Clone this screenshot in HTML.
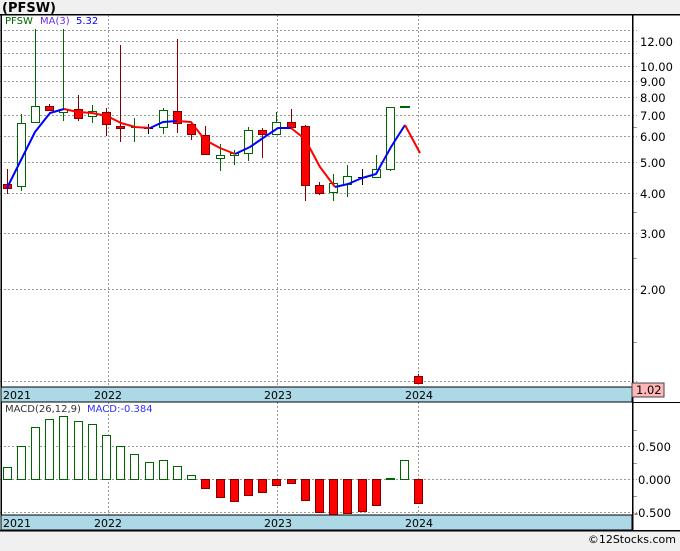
<!DOCTYPE html>
<html><head><meta charset="utf-8"><style>
html,body{margin:0;padding:0;background:#f0f0f0;}
body{width:680px;height:546px;overflow:hidden;font-family:"Liberation Sans","DejaVu Sans",sans-serif;}
svg text{font-family:"DejaVu Sans","Liberation Sans",sans-serif;}
</style></head><body>
<svg width="680" height="546" viewBox="0 0 680 546" xmlns="http://www.w3.org/2000/svg" shape-rendering="crispEdges">
<rect x="0" y="0" width="680" height="546" fill="#f0f0f0"/>
<text x="2" y="12" font-size="13" font-weight="bold" fill="#000">(PFSW)</text>
<rect x="0" y="14" width="680" height="517" fill="#fff"/>
<!-- horizontal grid price -->
<g stroke="#999" stroke-dasharray="2,2" stroke-width="1">
<line x1="0" y1="30.5" x2="637" y2="30.5"/>
<line x1="0" y1="41.5" x2="637" y2="41.5"/>
<line x1="0" y1="53.5" x2="637" y2="53.5"/>
<line x1="0" y1="66.5" x2="637" y2="66.5"/>
<line x1="0" y1="81.5" x2="637" y2="81.5"/>
<line x1="0" y1="97.5" x2="637" y2="97.5"/>
<line x1="0" y1="115.5" x2="637" y2="115.5"/>
<line x1="0" y1="136.5" x2="637" y2="136.5"/>
<line x1="0" y1="162.5" x2="637" y2="162.5"/>
<line x1="0" y1="193.5" x2="637" y2="193.5"/>
<line x1="0" y1="233.5" x2="637" y2="233.5"/>
<line x1="0" y1="289.5" x2="637" y2="289.5"/>
<line x1="0" y1="381.5" x2="637" y2="381.5"/>
<line x1="0" y1="446.5" x2="637" y2="446.5"/>
<line x1="0" y1="479.5" x2="637" y2="479.5"/>
<line x1="0" y1="512.5" x2="637" y2="512.5"/>
<line x1="108.5" y1="15" x2="108.5" y2="387"/>
<line x1="277.5" y1="15" x2="277.5" y2="387"/>
<line x1="418.5" y1="15" x2="418.5" y2="387"/>
<line x1="108.5" y1="402" x2="108.5" y2="515"/>
<line x1="277.5" y1="402" x2="277.5" y2="515"/>
<line x1="418.5" y1="402" x2="418.5" y2="515"/>
</g>
<g stroke="#999"><line x1="632" y1="127.5" x2="637" y2="127.5"/><line x1="632" y1="212.5" x2="637" y2="212.5"/><line x1="632" y1="258.5" x2="637" y2="258.5"/><line x1="632" y1="342.5" x2="637" y2="342.5"/><line x1="632" y1="463.5" x2="637" y2="463.5"/><line x1="632" y1="430.5" x2="637" y2="430.5"/><line x1="632" y1="496.5" x2="637" y2="496.5"/></g>
<!-- frame lines -->
<g stroke="#000" stroke-width="1.5">
<line x1="0" y1="14.5" x2="680" y2="14.5"/>
<line x1="632.5" y1="14" x2="632.5" y2="531"/>
<line x1="1" y1="14" x2="1" y2="531"/>
</g>
<!-- bands -->
<rect x="1" y="387" width="631" height="15" fill="#add8e6" stroke="#000" stroke-width="1"/>
<rect x="1" y="515" width="631" height="15" fill="#add8e6" stroke="#000" stroke-width="1"/>
<line x1="632" y1="402.5" x2="680" y2="402.5" stroke="#000"/>
<line x1="0" y1="530.5" x2="680" y2="530.5" stroke="#000" stroke-width="1.5"/>
<g font-size="11" fill="#000">
<text x="3" y="399">2021</text><text x="94" y="399">2022</text><text x="264" y="399">2023</text><text x="405" y="399">2024</text>
<text x="3" y="527">2021</text><text x="94" y="527">2022</text><text x="264" y="527">2023</text><text x="405" y="527">2024</text>
</g>
<!-- price labels -->
<g font-size="11.5" fill="#000">
<text x="640" y="46">12.00</text><text x="640" y="71">10.00</text><text x="640" y="86">9.00</text><text x="640" y="102">8.00</text><text x="640" y="120">7.00</text><text x="640" y="141">6.00</text><text x="640" y="167">5.00</text><text x="640" y="198">4.00</text><text x="640" y="238">3.00</text><text x="640" y="294">2.00</text>
<text x="638" y="451">0.500</text><text x="638" y="484">0.000</text><text x="634" y="517">-0.500</text>
</g>
<rect x="632" y="383" width="32" height="14" fill="#ffb6b6" stroke="#444"/>
<text x="636" y="394" font-size="11.5" fill="#000">1.02</text>
<!-- legends -->
<text x="5" y="24" font-size="10" fill="#006400">PFSW</text>
<text x="40" y="24" font-size="10" fill="#6a30e0">MA(3)</text>
<text x="76" y="24" font-size="10" fill="#0000ff">5.32</text>
<text x="5" y="412" font-size="10" fill="#333">MACD(26,12,9)</text>
<text x="87" y="412" font-size="10" fill="#3030ff">MACD:-0.384</text>
<!-- wicks -->
<g stroke-width="1">
<g stroke="#800000">
<line x1="7.5" y1="169" x2="7.5" y2="194"/>
<line x1="49.5" y1="104" x2="49.5" y2="111"/>
<line x1="78.5" y1="95" x2="78.5" y2="121"/>
<line x1="106.5" y1="108" x2="106.5" y2="136"/>
<line x1="120.5" y1="45" x2="120.5" y2="142"/>
<line x1="177.5" y1="39" x2="177.5" y2="133"/>
<line x1="191.5" y1="122" x2="191.5" y2="140"/>
<line x1="205.5" y1="126" x2="205.5" y2="155"/>
<line x1="262.5" y1="128" x2="262.5" y2="158"/>
<line x1="291.5" y1="109" x2="291.5" y2="128"/>
<line x1="305.5" y1="125" x2="305.5" y2="201"/>
<line x1="319.5" y1="182" x2="319.5" y2="195"/>
<line x1="418.5" y1="374" x2="418.5" y2="384"/>
</g>
<g stroke="#006400">
<line x1="21.5" y1="114" x2="21.5" y2="191"/>
<line x1="35.5" y1="29" x2="35.5" y2="122"/>
<line x1="63.5" y1="29" x2="63.5" y2="121"/>
<line x1="92.5" y1="105" x2="92.5" y2="123"/>
<line x1="134.5" y1="118" x2="134.5" y2="142"/>
<line x1="163.5" y1="108" x2="163.5" y2="134"/>
<line x1="220.5" y1="144" x2="220.5" y2="171"/>
<line x1="234.5" y1="150" x2="234.5" y2="165"/>
<line x1="248.5" y1="127" x2="248.5" y2="161"/>
<line x1="276.5" y1="112" x2="276.5" y2="134"/>
<line x1="333.5" y1="174" x2="333.5" y2="201"/>
<line x1="347.5" y1="165" x2="347.5" y2="197"/>
<line x1="376.5" y1="155" x2="376.5" y2="177"/>
<line x1="390.5" y1="107" x2="390.5" y2="171"/>
</g>
<g stroke="#000"><line x1="148.5" y1="124" x2="148.5" y2="134"/><line x1="144" y1="128.5" x2="153" y2="128.5"/><line x1="362.5" y1="169" x2="362.5" y2="185"/><line x1="358" y1="177.5" x2="367" y2="177.5"/></g>
<line x1="131" y1="127.5" x2="139" y2="127.5" stroke="#006400"/>
</g>
<!-- bodies -->
<g fill="#ff0000" stroke="#800000">
<rect x="3.5" y="184.5" width="8" height="4"/>
<rect x="45.5" y="106.5" width="8" height="4"/>
<rect x="74.5" y="109.5" width="8" height="9"/>
<rect x="102.5" y="112.5" width="8" height="12"/>
<rect x="116.5" y="126.5" width="8" height="2"/>
<rect x="173.5" y="111.5" width="8" height="12"/>
<rect x="187.5" y="124.5" width="8" height="10"/>
<rect x="201.5" y="135.5" width="8" height="19"/>
<rect x="258.5" y="130.5" width="8" height="4"/>
<rect x="287.5" y="122.5" width="8" height="5"/>
<rect x="301.5" y="126.5" width="8" height="59"/>
<rect x="315.5" y="185.5" width="8" height="8"/>
<rect x="414.5" y="376.5" width="8" height="7"/>
</g>
<g fill="#fff" stroke="#006400">
<rect x="17.5" y="123.5" width="8" height="63"/>
<rect x="31.5" y="106.5" width="8" height="16"/>
<rect x="59.5" y="109.5" width="8" height="3"/>
<rect x="88.5" y="111.5" width="8" height="5"/>
<rect x="159.5" y="110.5" width="8" height="17"/>
<rect x="216.5" y="155.5" width="8" height="3"/>
<rect x="230.5" y="153.5" width="8" height="2"/>
<rect x="244.5" y="130.5" width="8" height="23"/>
<rect x="272.5" y="122.5" width="8" height="12"/>
<rect x="329.5" y="183.5" width="8" height="9"/>
<rect x="343.5" y="176.5" width="8" height="8"/>
<rect x="372.5" y="169.5" width="8" height="8"/>
<rect x="386.5" y="107.5" width="8" height="62"/>
</g>
<rect x="400" y="106" width="10" height="2" fill="#006400"/>
<!-- MA line -->
<g fill="none" stroke-width="2" stroke-linejoin="round" shape-rendering="auto">
<polyline stroke="#0000ff" points="7,188 21,160 35,132 50,113 64,109"/>
<polyline stroke="#ff0000" points="64,109 78,112 92,113 107,116 121,123 135,127 150,128"/>
<polyline stroke="#0000ff" points="150,128 163,122 177,121"/>
<polyline stroke="#ff0000" points="177,121 191,122 205,140 220,148 235,154"/>
<polyline stroke="#0000ff" points="235,154 250,147 263,138 278,128 291,128"/>
<polyline stroke="#ff0000" points="291,128 305,139 320,167 335,187"/>
<polyline stroke="#0000ff" points="335,187 348,184 362,178 376,174 391,147 405,125"/>
<polyline stroke="#ff0000" points="405,125 420,153"/>
</g>
<!-- MACD bars -->
<g fill="#fff" stroke="#006400">
<rect x="3.5" y="467.5" width="8" height="12"/>
<rect x="17.5" y="446.5" width="8" height="33"/>
<rect x="31.5" y="427.5" width="8" height="52"/>
<rect x="45.5" y="419.5" width="8" height="60"/>
<rect x="59.5" y="416.5" width="8" height="63"/>
<rect x="74.5" y="421.5" width="8" height="58"/>
<rect x="88.5" y="424.5" width="8" height="55"/>
<rect x="102.5" y="435.5" width="8" height="44"/>
<rect x="116.5" y="446.5" width="8" height="33"/>
<rect x="130.5" y="454.5" width="8" height="25"/>
<rect x="145.5" y="462.5" width="8" height="17"/>
<rect x="159.5" y="460.5" width="8" height="19"/>
<rect x="173.5" y="466.5" width="8" height="13"/>
<rect x="187.5" y="475.5" width="8" height="4"/>
<rect x="400.5" y="460.5" width="8" height="19"/>
</g>
<rect x="386" y="478" width="9" height="2" fill="#006400"/>
<g fill="#ff0000" stroke="#800000">
<rect x="201.5" y="479.5" width="8" height="9"/>
<rect x="216.5" y="479.5" width="8" height="18"/>
<rect x="230.5" y="479.5" width="8" height="22"/>
<rect x="244.5" y="479.5" width="8" height="16"/>
<rect x="258.5" y="479.5" width="8" height="13"/>
<rect x="272.5" y="479.5" width="8" height="6"/>
<rect x="287.5" y="479.5" width="8" height="4"/>
<rect x="301.5" y="479.5" width="8" height="21"/>
<rect x="315.5" y="479.5" width="8" height="33"/>
<rect x="329.5" y="479.5" width="8" height="35"/>
<rect x="343.5" y="479.5" width="8" height="34"/>
<rect x="358.5" y="479.5" width="8" height="32"/>
<rect x="372.5" y="479.5" width="8" height="26"/>
<rect x="414.5" y="479.5" width="8" height="24"/>
</g>
<text x="676" y="543" font-size="11" fill="#000" text-anchor="end">©12Stocks.com</text>
</svg>
</body></html>
